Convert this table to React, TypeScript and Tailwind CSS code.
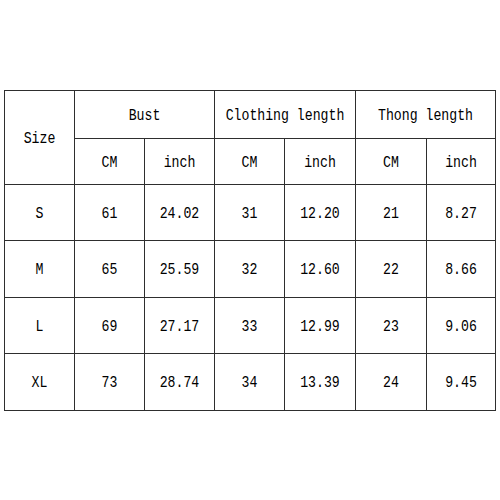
const rows = [
  ['S', '61', '24.02', '31', '12.20', '21', '8.27'],
  ['M', '65', '25.59', '32', '12.60', '22', '8.66'],
  ['L', '69', '27.17', '33', '12.99', '23', '9.06'],
  ['XL', '73', '28.74', '34', '13.39', '24', '9.45'],
];

const cell = 'bg-white flex items-center justify-center';

function Txt({ children }: { children: React.ReactNode }) {
  return <span className="inline-block scale-y-[1.25] translate-y-[1px]">{children}</span>;
}

export default function App() {
  return (
    <div className="w-[500px] h-[500px] bg-white pt-[90px] pl-[4px] text-[13.2px] text-black [font-family:'Liberation_Mono',monospace]">
      <div className="grid w-[492px] grid-cols-[69px_69px_69px_69px_70px_70px_68px] grid-rows-[47px_45px_55px_56px_55px_56px] gap-px bg-[#2e2e2e] p-px">
        <div className={`${cell} row-span-2`}><Txt>Size</Txt></div>
        <div className={`${cell} col-span-2`}><Txt>Bust</Txt></div>
        <div className={`${cell} col-span-2`}><Txt>Clothing length</Txt></div>
        <div className={`${cell} col-span-2`}><Txt>Thong length</Txt></div>
        {['CM', 'inch', 'CM', 'inch', 'CM', 'inch'].map((t, i) => (
          <div key={i} className={cell}><Txt>{t}</Txt></div>
        ))}
        {rows.map((r) =>
          r.map((v, i) => (
            <div key={r[0] + i} className={cell}><Txt>{v}</Txt></div>
          ))
        )}
      </div>
    </div>
  );
}
